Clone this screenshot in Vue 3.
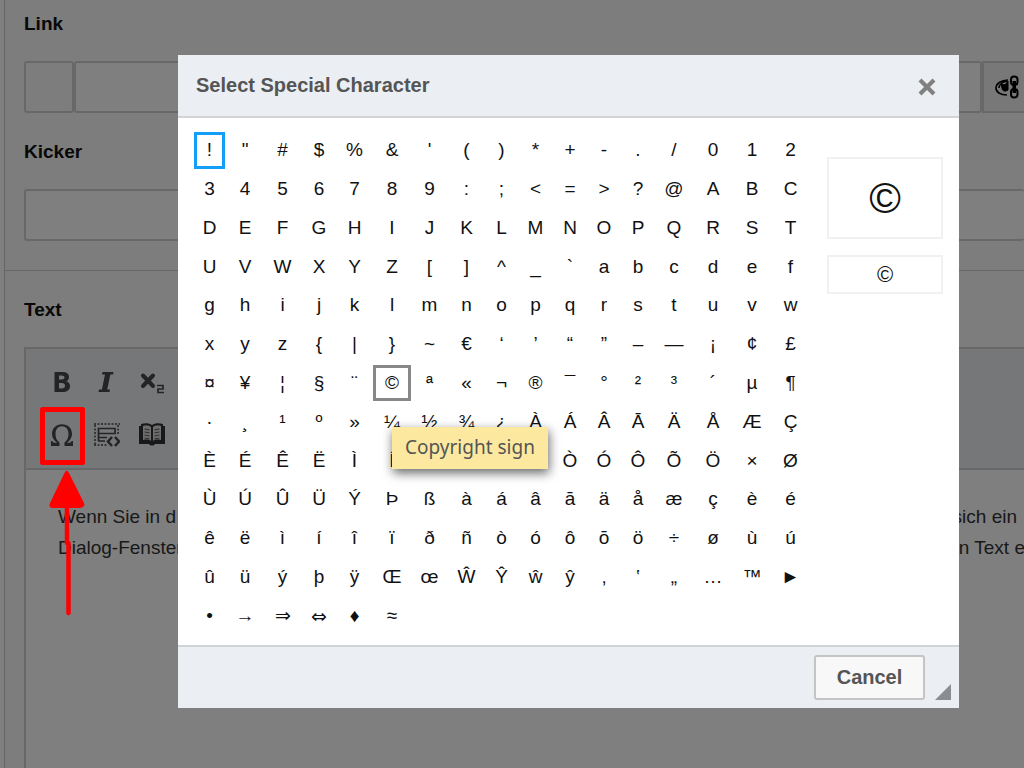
<script setup>
const rows = [
  ['!', '"', '#', '$', '%', '&', "'", '(', ')', '*', '+', '-', '.', '/', '0', '1', '2'],
  [...'3456789:;<=>?@ABC'],
  [...'DEFGHIJKLMNOPQRST'],
  [...'UVWXYZ[]^_`abcdef'],
  [...'ghijklmnopqrstuvw'],
  [...'xyz{|}~€‘’“”–—¡¢£'],
  [...'¤¥¦§¨©ª«¬®¯°²³´µ¶'],
  [...'·¸¹º»¼½¾¿ÀÁÂĀÄÅÆÇ'],
  [...'ÈÉÊËÌÍÎÏÐÑÒÓÔÕÖ×Ø'],
  [...'ÙÚÛÜÝÞßàáâāäåæçèé'],
  [...'êëìíîïðñòóôōö÷øùú'],
  [...'ûüýþÿŒœŴŶŵŷ‚‛„…™►'],
  [...'•→⇒⇔♦≈'],
]
const chars = rows.flat()
</script>

<template>
  <div class="page">
    <section class="fields">
      <label for="link">Link</label>
      <div class="link-row">
        <input class="prefix" aria-label="Link protocol" />
        <input id="link" class="grow" />
        <button class="picker" aria-label="Choose link">
          <svg width="24" height="24" viewBox="0 0 24 24" fill="none" stroke="#000" stroke-width="2">
            <path d="M13 5C6 5 1 9 1 13c0 4 4 7 11 7M12 6C7 7 4 10 4 13" stroke-width="1.600" />
            <path d="M6 9l4 1 3-4v9c-3 2-6 1-6-2z" fill="#000" stroke-width="1" />
            <rect x="16" y="1.500" width="6.500" height="8.500" rx="3" />
            <rect x="16" y="14" width="6.500" height="8.500" rx="3" />
            <path d="M19.250 6v12" stroke-width="3.500" />
          </svg>
        </button>
      </div>
      <label for="kicker">Kicker</label>
      <input id="kicker" class="kicker" />
    </section>
    <section class="text-field">
      <h2>Text</h2>
      <div class="editor">
        <div class="toolbar">
          <button aria-label="Bold">
            <svg width="26" height="26" viewBox="0 0 26 26">
              <path fill-rule="evenodd" fill="#484848" d="M5.500 3H13c5 0 7 2 7 5 0 2-1 3.700-3 4.300 2.500.5 4 2.300 4 4.700 0 4-3 6-7.500 6h-8zM10 6.500v4h2.500c2 0 3-.7 3-2s-1-2-3-2zM10 14v5.500h2.500c2.500 0 3.500-1 3.500-2.800S15 14 12.500 14z" />
            </svg>
          </button>
          <button aria-label="Italic">
            <svg width="26" height="26" viewBox="0 0 26 26">
              <path fill="#484848" d="M8.500 3h11l-.5 2.500h-2.700L13.200 20.500H16l-.5 2.500h-11l.5-2.500h2.900L11 5.500H8z" />
            </svg>
          </button>
          <button aria-label="Subscript">
            <svg width="26" height="26" viewBox="0 0 26 26" fill="none" stroke="#484848">
              <path d="M4 6.500l10 10.500M14 6.500L4 17" stroke-width="4" stroke-linecap="round" />
              <path d="M18 16.500h6v3.500h-5v3.500h6" stroke-width="1.700" />
            </svg>
          </button>
          <button aria-label="Special character">
            <svg width="26" height="26" viewBox="0 0 26 26" fill="#484848">
              <path d="M2 19h1.500c.3 1.300.8 1.700 2 1.700h2.700C4.800 18.500 3 15.500 3 12 3 6 7.200 2.200 13 2.200S23 6 23 12c0 3.500-1.800 6.500-5.200 8.700h2.700c1.200 0 1.700-.4 2-1.700H24v5h-8.500v-3.500c2.700-2 4-4.800 4-8.500 0-4.800-2.500-7.700-6.500-7.700S6.500 7.200 6.500 12c0 3.700 1.300 6.500 4 8.500V24H2z" />
            </svg>
          </button>
          <button aria-label="Embed block">
            <svg width="26" height="26" viewBox="0 0 26 26" fill="none" stroke="#484848" stroke-width="2">
              <path d="M0 2h26M0 23h14" stroke-width="1.500" stroke-dasharray="2 1.500" />
              <path d="M1 3v20M24 3v10" stroke-width="1.500" stroke-dasharray="2 1.500" />
              <path d="M4.500 6.500h16.500v5H4.500zM4.500 6v13M4 15.500h9M4 19h7" stroke-width="1.700" />
              <path d="M18 15l-4 4.500 4 4.500M21 15l4 4.500-4 4.500" stroke-width="2.500" />
            </svg>
          </button>
          <button aria-label="Glossary">
            <svg width="28" height="26" viewBox="0 0 28 26">
              <path fill="#333" d="M1 4h2V2c4-1 8-1 11 1 3-2 7-2 11-1v2h2v18H17c-1 2-5 2-6 0H1z" />
              <path fill="#ddd" d="M5 4c3-.7 6-.5 8 1v14c-2-1.500-5-1.700-8-1zM15 5c2-1.500 5-1.700 8-1v14c-3-.7-6-.5-8 1z" />
              <path fill="none" stroke="#666" stroke-width="1.200" d="M6.500 7l5 .8M6.500 10l5 .8M6.500 13l5 .8M6.500 16l5 .8M21.500 7l-5 .8M21.500 10l-5 .8M21.500 13l-5 .8M21.500 16l-5 .8" />
            </svg>
          </button>
        </div>
        <div class="content">
          <p><span>Wenn Sie in d</span><span>sich ein</span></p>
          <p><span>Dialog-Fenster</span><span class="bleed">en Text e</span></p>
        </div>
      </div>
    </section>
  </div>

  <div class="overlay">
    <div class="dialog" role="dialog" aria-labelledby="title">
      <header>
        <h1 id="title">Select Special Character</h1>
        <button class="close" aria-label="Close">
          <svg width="18" height="18" viewBox="0 0 18 18" stroke="#808080" stroke-width="4.200">
            <path d="M2 2l14 14M16 2L2 16" />
          </svg>
        </button>
      </header>
      <div class="body">
        <div class="chars">
          <button
            v-for="(c, i) in chars"
            :key="i"
            :class="{ focused: i === 0, hovered: c === '©', symbol: c === '⇔' }"
          >{{ c }}</button>
        </div>
        <aside>
          <div class="preview big">©</div>
          <div class="preview small">©</div>
        </aside>
      </div>
      <footer>
        <button class="cancel">Cancel</button>
        <svg class="grip" width="16" height="16" viewBox="0 0 16 16"><path d="M16 0v16H0z" fill="#8b8e90" /></svg>
      </footer>
    </div>
  </div>
  <div class="tooltip" role="tooltip">Copyright sign</div>
  <svg class="marker" width="50" height="212" viewBox="0 0 50 212" fill="none" stroke="#f00">
    <rect x="4.500" y="4.500" width="40" height="53" stroke-width="5" stroke-linejoin="round" />
    <path d="M27 67L12 98q-2 5 3 5h27q6-1 4-5L31 68q-2-4-4-1z" fill="#f00" stroke="none" />
    <path d="M29 100v38M30.500 138v70" stroke-width="4.500" stroke-linecap="round" />
  </svg>
</template>

<style>
html,
body {
  margin: 0;
  overflow: hidden;
}
</style>

<style scoped>
.page,
.overlay,
.tooltip,
button,
input {
  box-sizing: border-box;
  font-family: "Liberation Sans", Arial, sans-serif;
  font-size: 19px;
}
button {
  padding: 0;
  margin: 0;
  border: 0;
  background: none;
}
.page {
  height: 100vh;
  margin-left: 4px;
  border-left: 1px solid #ccc;
  background: #fafafa;
  overflow: hidden;
}
.fields {
  padding: 12px 0 29px 19px;
  border-bottom: 1px solid #ccc;
}
label,
h2 {
  display: block;
  margin: 0;
  font-size: 19px;
  font-weight: bold;
  line-height: 24px;
  color: #111;
}
input {
  min-width: 0;
  height: 52px;
  border: 2px solid #d1d1d1;
  border-radius: 3px;
  background: #fff;
}
.link-row {
  display: flex;
  margin: 25px 0 27px;
}
.prefix {
  width: 50px;
  background: #fafafa;
}
.grow {
  flex: 1;
}
.picker {
  width: 42px;
  display: flex;
  align-items: center;
  padding-left: 11px;
  border: 2px solid #d1d1d1;
  border-right: 0;
  background: #f0f0f0;
}
.kicker {
  display: block;
  width: 100%;
  margin-top: 25px;
  border-right: 0;
}
.text-field {
  padding: 27px 0 0 19px;
}
.editor {
  margin-top: 25px;
  border: 2px solid #d1d1d1;
  border-right: 0;
  background: #fff;
}
.toolbar {
  display: grid;
  grid-template-columns: repeat(3, 44px);
  grid-template-rows: 32px 32px;
  gap: 21px 1px;
  padding: 17px 14px 17px;
  border-bottom: 2px solid #d1d1d1;
  background: #ebeff3;
}
.toolbar button {
  display: flex;
  align-items: center;
  justify-content: center;
}
.content {
  height: 300px;
  padding: 31px 7px 0 32px;
  line-height: 31px;
  color: #333;
}
.content p {
  display: flex;
  justify-content: space-between;
  margin: 0;
}
.bleed {
  margin-right: -8px;
}
.overlay {
  position: fixed;
  inset: 0;
  padding: 55px 65px 60px 178px;
  background: rgba(0, 0, 0, 0.5);
}
.dialog {
  background: #fff;
}
header {
  display: flex;
  align-items: center;
  justify-content: space-between;
  height: 61px;
  padding: 0 23px 0 18px;
  border-bottom: 2px solid #d1d3d5;
  background: #ebeff3;
}
h1 {
  margin: 0;
  font-size: 20px;
  color: #555;
}
.close {
  display: flex;
  padding-top: 3px;
}
.body {
  display: flex;
  justify-content: space-between;
  padding: 13px 16px 10px 14px;
}
.chars {
  flex: 0 1 618px;
  min-height: 504px;
  display: grid;
  grid-template-columns: 35fr 36fr 39fr 34fr 37fr 38fr 37fr 37fr 33fr 35fr 34fr 34fr 34fr 38fr 40fr 38fr 39fr;
  grid-template-rows: repeat(13, 1fr);
}
.chars button {
  min-width: 0;
  margin: 1px 0;
  color: #111;
}
.chars .focused {
  margin: 1px 2px;
  border: 3px solid #139ff7;
}
.chars .hovered {
  border: 3px solid #888;
}
.chars .symbol {
  font-family: "DejaVu Sans", sans-serif;
}
aside {
  width: 116px;
  padding-top: 26px;
}
.preview {
  display: flex;
  align-items: center;
  justify-content: center;
  border: 2px solid #f1f1f1;
  color: #111;
}
.big {
  height: 78px;
  font-size: 43px;
}
.small {
  height: 35px;
  margin-top: 16px;
  font-size: 22px;
}
footer {
  display: flex;
  align-items: flex-end;
  justify-content: flex-end;
  gap: 10px;
  padding: 8px;
  border-top: 2px solid #d1d3d5;
  background: #ebeff3;
}
.cancel {
  width: 111px;
  height: 45px;
  border: 2px solid #c4c4c4;
  border-radius: 3px;
  background: #f8f8f8;
  color: #555;
  font-size: 20px;
  font-weight: bold;
}
.tooltip {
  position: fixed;
  left: 392px;
  top: 427px;
  padding: 0 13px 2px;
  font-family: "Noto Sans", sans-serif;
  line-height: 40px;
  color: #555;
  background: #fce99f;
  box-shadow: 1px 4px 10px rgba(0, 0, 0, 0.6);
}
.marker {
  position: fixed;
  left: 38px;
  top: 405px;
}
</style>
